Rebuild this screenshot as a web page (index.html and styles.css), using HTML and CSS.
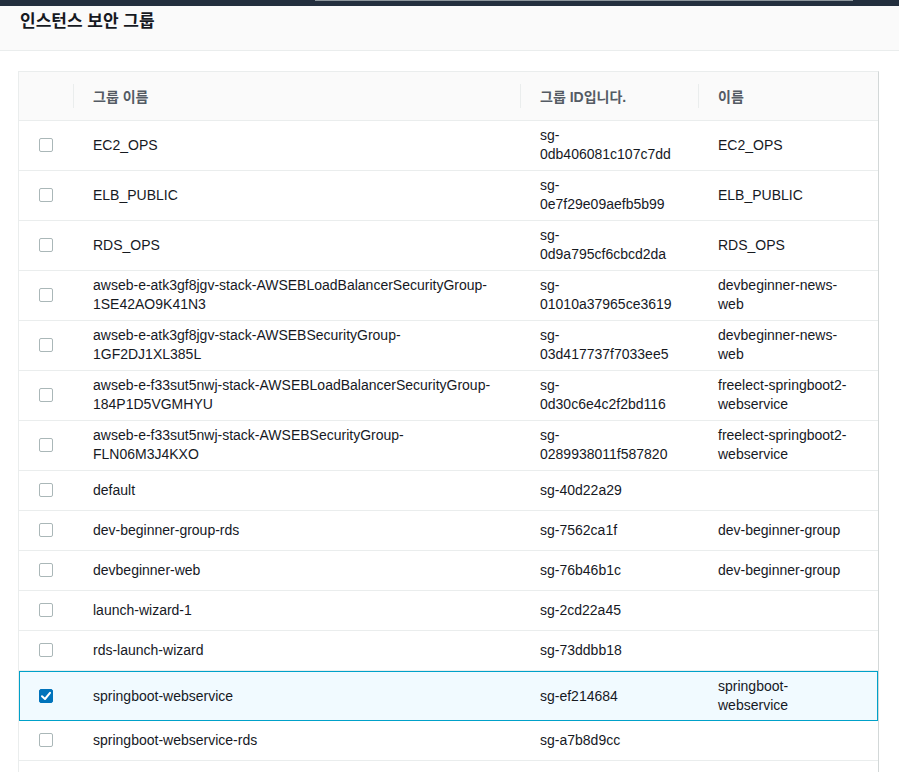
FILE: index.html
```html
<!DOCTYPE html>
<html lang="ko">
<head>
<meta charset="utf-8">
<title>인스턴스 보안 그룹</title>
<link rel="stylesheet" href="styles.css">
</head>
<body>
<div class="topbar"><div class="topbar-search"></div></div>
<header class="page-header">
  <h1>인스턴스 보안 그룹</h1>
</header>
<div class="table">
  <div class="thead">
    <div class="th th-check"></div>
    <div class="th"><span>그룹 이름</span></div>
    <div class="th"><span>그룹 ID입니다.</span></div>
    <div class="th"><span>이름</span></div>
  </div>

  <div class="row"><div class="cell-check"><span class="cb"></span></div><div class="cell">EC2_OPS</div><div class="cell cell-id">sg-0db406081c107c7dd</div><div class="cell cell-name">EC2_OPS</div></div>
  <div class="row"><div class="cell-check"><span class="cb"></span></div><div class="cell">ELB_PUBLIC</div><div class="cell cell-id">sg-0e7f29e09aefb5b99</div><div class="cell cell-name">ELB_PUBLIC</div></div>
  <div class="row"><div class="cell-check"><span class="cb"></span></div><div class="cell">RDS_OPS</div><div class="cell cell-id">sg-0d9a795cf6cbcd2da</div><div class="cell cell-name">RDS_OPS</div></div>
  <div class="row"><div class="cell-check"><span class="cb"></span></div><div class="cell">awseb-e-atk3gf8jgv-stack-AWSEBLoadBalancerSecurityGroup-1SE42AO9K41N3</div><div class="cell cell-id">sg-01010a37965ce3619</div><div class="cell cell-name">devbeginner-news-web</div></div>
  <div class="row"><div class="cell-check"><span class="cb"></span></div><div class="cell">awseb-e-atk3gf8jgv-stack-AWSEBSecurityGroup-1GF2DJ1XL385L</div><div class="cell cell-id">sg-03d417737f7033ee5</div><div class="cell cell-name">devbeginner-news-web</div></div>
  <div class="row"><div class="cell-check"><span class="cb"></span></div><div class="cell">awseb-e-f33sut5nwj-stack-AWSEBLoadBalancerSecurityGroup-184P1D5VGMHYU</div><div class="cell cell-id">sg-0d30c6e4c2f2bd116</div><div class="cell cell-name">freelect-springboot2-webservice</div></div>
  <div class="row"><div class="cell-check"><span class="cb"></span></div><div class="cell">awseb-e-f33sut5nwj-stack-AWSEBSecurityGroup-FLN06M3J4KXO</div><div class="cell cell-id">sg-0289938011f587820</div><div class="cell cell-name">freelect-springboot2-webservice</div></div>
  <div class="row"><div class="cell-check"><span class="cb"></span></div><div class="cell">default</div><div class="cell cell-id">sg-40d22a29</div><div class="cell cell-name"></div></div>
  <div class="row"><div class="cell-check"><span class="cb"></span></div><div class="cell">dev-beginner-group-rds</div><div class="cell cell-id">sg-7562ca1f</div><div class="cell cell-name">dev-beginner-group</div></div>
  <div class="row"><div class="cell-check"><span class="cb"></span></div><div class="cell">devbeginner-web</div><div class="cell cell-id">sg-76b46b1c</div><div class="cell cell-name">dev-beginner-group</div></div>
  <div class="row"><div class="cell-check"><span class="cb"></span></div><div class="cell">launch-wizard-1</div><div class="cell cell-id">sg-2cd22a45</div><div class="cell cell-name"></div></div>
  <div class="row"><div class="cell-check"><span class="cb"></span></div><div class="cell">rds-launch-wizard</div><div class="cell cell-id">sg-73ddbb18</div><div class="cell cell-name"></div></div>
  <div class="row row-selected"><div class="cell-check"><span class="cb cb-checked"><svg viewBox="0 0 14 14" width="14" height="14"><polyline points="3,7.2 6,10 11,3.8" fill="none" stroke="#fff" stroke-width="2" stroke-linecap="round" stroke-linejoin="round"/></svg></span></div><div class="cell">springboot-webservice</div><div class="cell cell-id">sg-ef214684</div><div class="cell cell-name">springboot-webservice</div></div>
  <div class="row"><div class="cell-check"><span class="cb"></span></div><div class="cell">springboot-webservice-rds</div><div class="cell cell-id">sg-a7b8d9cc</div><div class="cell cell-name"></div></div>
  <div class="row"><div class="cell-check"><span class="cb"></span></div><div class="cell"></div><div class="cell cell-id"></div><div class="cell cell-name"></div></div>
</div>
</body>
</html>
```

FILE: styles.css
```css
html, body {
  margin: 0;
  padding: 0;
  background: #ffffff;
}

body {
  font-family: "Liberation Sans", "Noto Sans CJK KR", sans-serif;
  font-size: 14px;
  color: #16191f;
}

.topbar {
  height: 6px;
  background: #232f3e;
  display: flex;
  align-items: flex-start;
  padding-left: 315px;
}

.topbar-search {
  width: 538px;
  height: 1px;
  background: #8d969c;
}

.page-header {
  box-sizing: border-box;
  height: 45px;
  padding: 4px 20px 0;
  background: #fafafa;
  border-bottom: 1px solid #eaeded;
}

.page-header h1 {
  margin: 0;
  font-family: "Noto Sans CJK KR", "Liberation Sans", sans-serif;
  font-size: 17px;
  line-height: 20px;
  font-weight: 700;
  color: #16191f;
}

.table {
  margin: 20px 20px 0 18px;
  border: 1px solid #eaeded;
  border-right-color: #d3d8d8;
  background: #fff;
}

.thead,
.row {
  display: grid;
  grid-template-columns: 54px 447px 178px 1fr;
  align-items: center;
}

.thead {
  box-sizing: border-box;
  height: 49px;
  background: #fafafa;
  border-bottom: 1px solid #eaeded;
}

.th {
  height: 24px;
  display: flex;
  align-items: center;
  padding: 0 20px 0 19px;
  border-left: 1px solid #eaeded;
  font-family: "Liberation Sans", "Noto Sans CJK KR", sans-serif;
  font-weight: 700;
  color: #545b64;
}

.th.th-check {
  border-left: none;
}

.row {
  box-sizing: border-box;
  min-height: 40px;
  padding: 5px 0 6px;
  border-bottom: 1px solid #eaeded;
  line-height: 19px;
}

.cell {
  padding: 0 20px;
  overflow-wrap: break-word;
}

.cell-name {
  padding-right: 24px;
}

.cell-check {
  display: flex;
  align-items: center;
  padding-left: 20px;
}

.cb {
  box-sizing: border-box;
  display: block;
  width: 14px;
  height: 14px;
  border: 1px solid #aab7b8;
  border-radius: 2px;
  background: #fff;
}

.cb-checked {
  border-color: #0073bb;
  background: #0073bb;
}

.cb-checked svg {
  display: block;
  margin: -1px;
}

.row-selected {
  grid-template-columns: 53px 447px 178px 1fr;
  padding: 5px 0 5px;
  background: #f1faff;
  border: 1px solid #00a1c9;
}

.row-selected .cell-check {
  padding-left: 19px;
}
```
